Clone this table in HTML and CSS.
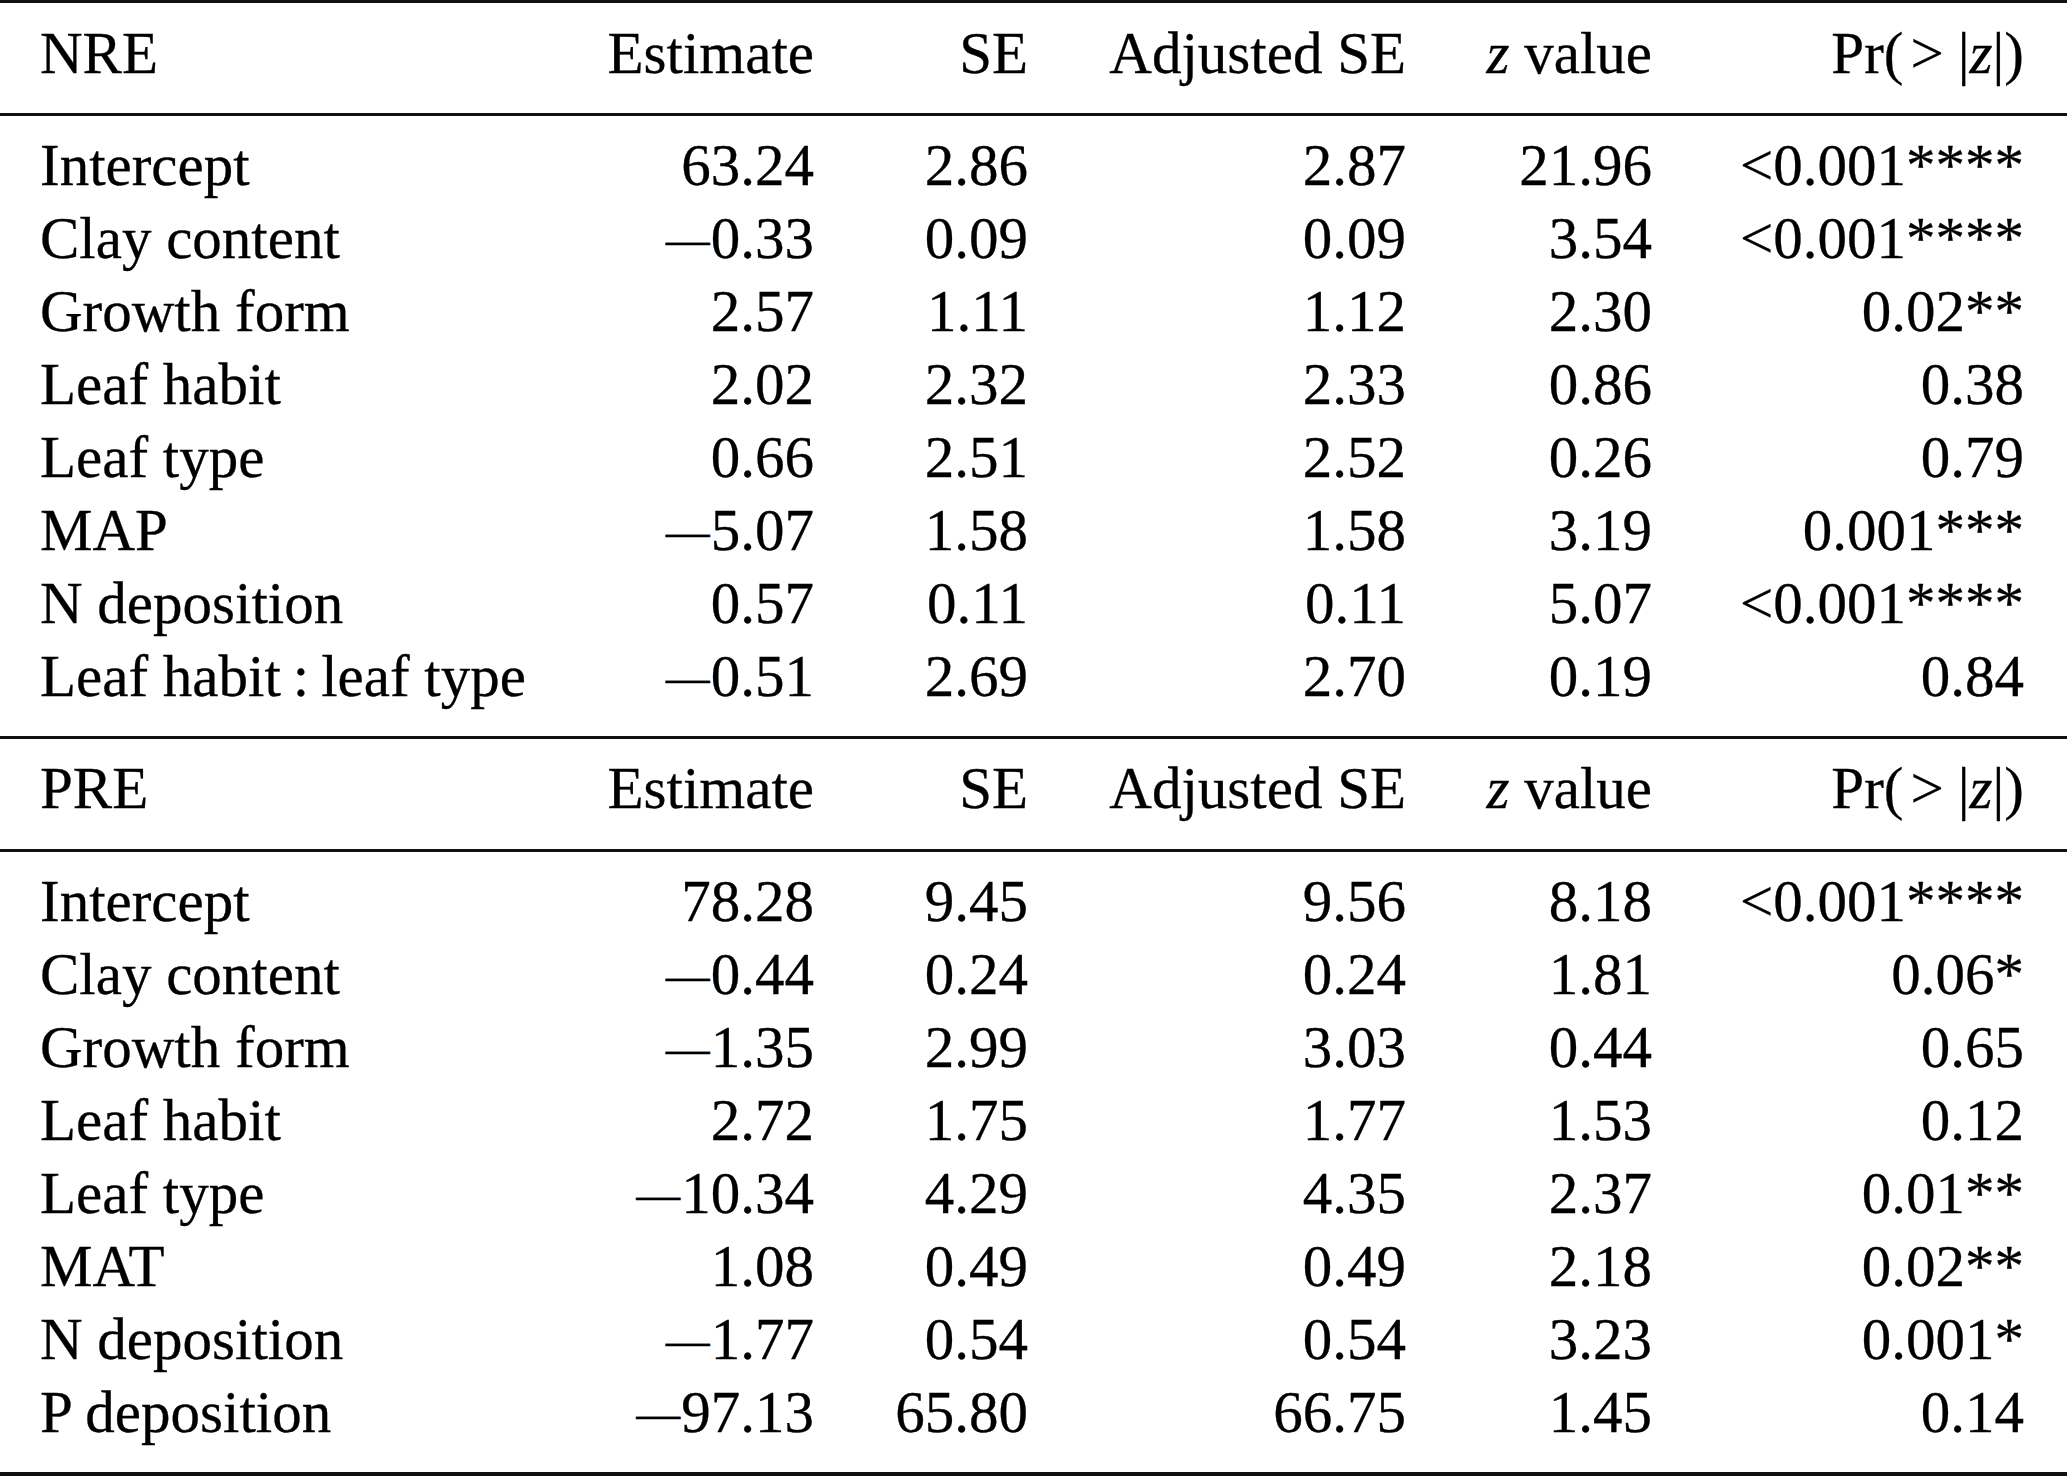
FILE: index.html
```html
<!DOCTYPE html>
<html lang="en">
<head>
<meta charset="utf-8">
<title>Regression table</title>
<link rel="stylesheet" href="styles.css">
</head>
<body>
<div class="stats" role="table">
  <div class="row head top" role="row">
    <div class="c name">NRE</div>
    <div class="c">Estimate</div>
    <div class="c">SE</div>
    <div class="c">Adjusted SE</div>
    <div class="c"><i>z</i> value</div>
    <div class="c">Pr(<span class="rel">&gt;</span>|<i>z</i>|)</div>
  </div>
  <div class="group" role="rowgroup">
    <div class="row"><div class="c name">Intercept</div><div class="c">63.24</div><div class="c">2.86</div><div class="c">2.87</div><div class="c">21.96</div><div class="c">&lt;0.001****</div></div>
    <div class="row"><div class="c name">Clay content</div><div class="c"><span class="minus">—</span>0.33</div><div class="c">0.09</div><div class="c">0.09</div><div class="c">3.54</div><div class="c">&lt;0.001****</div></div>
    <div class="row"><div class="c name">Growth form</div><div class="c">2.57</div><div class="c">1.11</div><div class="c">1.12</div><div class="c">2.30</div><div class="c">0.02**</div></div>
    <div class="row"><div class="c name">Leaf habit</div><div class="c">2.02</div><div class="c">2.32</div><div class="c">2.33</div><div class="c">0.86</div><div class="c">0.38</div></div>
    <div class="row"><div class="c name">Leaf type</div><div class="c">0.66</div><div class="c">2.51</div><div class="c">2.52</div><div class="c">0.26</div><div class="c">0.79</div></div>
    <div class="row"><div class="c name">MAP</div><div class="c"><span class="minus">—</span>5.07</div><div class="c">1.58</div><div class="c">1.58</div><div class="c">3.19</div><div class="c">0.001***</div></div>
    <div class="row"><div class="c name">N deposition</div><div class="c">0.57</div><div class="c">0.11</div><div class="c">0.11</div><div class="c">5.07</div><div class="c">&lt;0.001****</div></div>
    <div class="row"><div class="c name">Leaf habit<span class="colon">:</span>leaf type</div><div class="c"><span class="minus">—</span>0.51</div><div class="c">2.69</div><div class="c">2.70</div><div class="c">0.19</div><div class="c">0.84</div></div>
  </div>
  <div class="row head" role="row">
    <div class="c name">PRE</div>
    <div class="c">Estimate</div>
    <div class="c">SE</div>
    <div class="c">Adjusted SE</div>
    <div class="c"><i>z</i> value</div>
    <div class="c">Pr(<span class="rel">&gt;</span>|<i>z</i>|)</div>
  </div>
  <div class="group final" role="rowgroup">
    <div class="row"><div class="c name">Intercept</div><div class="c">78.28</div><div class="c">9.45</div><div class="c">9.56</div><div class="c">8.18</div><div class="c">&lt;0.001****</div></div>
    <div class="row"><div class="c name">Clay content</div><div class="c"><span class="minus">—</span>0.44</div><div class="c">0.24</div><div class="c">0.24</div><div class="c">1.81</div><div class="c">0.06*</div></div>
    <div class="row"><div class="c name">Growth form</div><div class="c"><span class="minus">—</span>1.35</div><div class="c">2.99</div><div class="c">3.03</div><div class="c">0.44</div><div class="c">0.65</div></div>
    <div class="row"><div class="c name">Leaf habit</div><div class="c">2.72</div><div class="c">1.75</div><div class="c">1.77</div><div class="c">1.53</div><div class="c">0.12</div></div>
    <div class="row"><div class="c name">Leaf type</div><div class="c"><span class="minus">—</span>10.34</div><div class="c">4.29</div><div class="c">4.35</div><div class="c">2.37</div><div class="c">0.01**</div></div>
    <div class="row"><div class="c name">MAT</div><div class="c">1.08</div><div class="c">0.49</div><div class="c">0.49</div><div class="c">2.18</div><div class="c">0.02**</div></div>
    <div class="row"><div class="c name">N deposition</div><div class="c"><span class="minus">—</span>1.77</div><div class="c">0.54</div><div class="c">0.54</div><div class="c">3.23</div><div class="c">0.001*</div></div>
    <div class="row"><div class="c name">P deposition</div><div class="c"><span class="minus">—</span>97.13</div><div class="c">65.80</div><div class="c">66.75</div><div class="c">1.45</div><div class="c">0.14</div></div>
  </div>
</div>
</body>
</html>
```

FILE: styles.css
```css
html, body {
  margin: 0;
  padding: 0;
  background: #ffffff;
}

.stats {
  width: 2067px;
  font-family: "Liberation Serif", "Times New Roman", serif;
  font-size: 59px;
  line-height: 73px;
  color: #000;
  -webkit-text-stroke: 0.3px #000;
}

.row {
  display: grid;
  grid-template-columns: 560px 254px 214px 378px 246px 372px;
  padding-right: 43px;
}

.c {
  text-align: right;
  white-space: nowrap;
}

.c.name {
  text-align: left;
  padding-left: 40px;
}

.head {
  padding-top: 13px;
  padding-bottom: 24px;
  border-bottom: 3px solid #111;
}

.head.top {
  padding-top: 14px;
  padding-bottom: 23px;
  border-top: 3px solid #111;
}

.group {
  padding-top: 13px;
  padding-bottom: 23px;
  border-bottom: 3px solid #111;
}

.group.final {
  border-bottom: 4px solid #111;
}

.rel {
  margin: 0 14px 0 7px;
}

.colon {
  margin: 0 12px;
}

.minus {
  font-size: 44px;
  line-height: 1;
  vertical-align: 4px;
  margin-right: 1px;
}

i {
  font-style: italic;
}
```
